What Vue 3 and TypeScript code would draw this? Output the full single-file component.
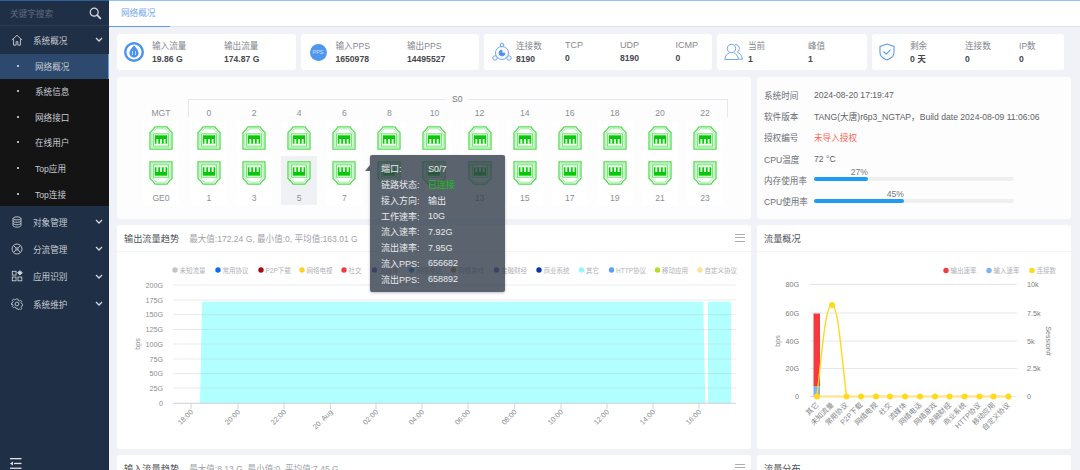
<script setup lang="ts">
interface SubItem { label: string; active?: boolean }
const subItems: SubItem[] = [
  { label: '网络概况', active: true },
  { label: '系统信息' },
  { label: '网络接口' },
  { label: '在线用户' },
  { label: 'Top应用' },
  { label: 'Top连接' },
]
const groups = ['对象管理', '分流管理', '应用识别', '系统维护']
const topPorts = [0, 2, 4, 6, 8, 10, 12, 14, 16, 18, 20, 22]

const info = [
  { k: '系统时间', v: '2024-08-20 17:19:47' },
  { k: '软件版本', v: 'TANG(大唐)r6p3_NGTAP，Build date 2024-08-09 11:06:06' },
  { k: '授权编号', v: '未导入授权', warn: true },
  { k: 'CPU温度', v: '72 °C' },
]
const usage = [
  { k: '内存使用率', pct: 27 },
  { k: 'CPU使用率', pct: 45 },
]
const tip = [
  ['端口:', 'S0/7'],
  ['链路状态:', '已连接'],
  ['接入方向:', '输出'],
  ['工作速率:', '10G'],
  ['流入速率:', '7.92G'],
  ['流出速率:', '7.95G'],
  ['流入PPS:', '656682'],
  ['流出PPS:', '658892'],
]

const legend1 = [
  [175, '未知流量', '#c4c4c4'], [218, '常用协议', '#0a6cff'], [261, 'P2P下载', '#a50b10'],
  [302, '网络电视', '#ffd21a'], [344, '社交', '#f6393f'], [374.5, '流媒体', '#6c4fe0'],
  [411.5, '网络电话', '#1f8fd8'], [453.5, '网络游戏', '#c98a2a'], [496.5, '金融财经', '#7a4fc8'],
  [539, '商业系统', '#0a35a8'], [581.5, '其它', '#8ff7ff'], [611.5, 'HTTP协议', '#5a9dff'],
  [657.5, '移动应用', '#b4dd2a'], [700, '自定义协议', '#ffe19a'],
] as [number, string, string][]
const yAxis1 = [
  [285, '200G'], [300, '175G'], [314.7, '150G'], [329.5, '125G'],
  [344, '100G'], [359, '75G'], [373.7, '50G'], [388, '25G'], [403, '0'],
] as [number, string][]
const xAxis1 = [
  [191, '18:00'], [238, '20:00'], [284, '22:00'], [330.5, '20. Aug'], [376, '02:00'], [422, '04:00'],
  [468, '06:00'], [514.7, '08:00'], [561, '10:00'], [607, '12:00'], [653, '14:00'], [699, '16:00'],
] as [number, string][]

const left2 = [[284.5, '80G'], [313, '60G'], [341, '40G'], [368.5, '20G'], [396.5, '0']] as [number, string][]
const right2 = ['10k', '7.5k', '5k', '2.5k', '0']
const pts2 = [817, 832, 846.5, 861, 876, 890, 905, 920, 935, 949.5, 964.5, 979.5, 993.5, 1008.5]
const cats2 = ['其它', '未知流量', '常用协议', 'P2P下载', '网络电视', '社交', '流媒体', '网络电话', '网络游戏', '金融财经', '商业系统', 'HTTP协议', '移动应用', '自定义协议']
const legend2 = [[946, '输出速率', '#f6393f'], [989, '输入速率', '#7ab2f5'], [1032, '连接数', '#ffd91a']] as [number, string, string][]
</script>

<template>
  <div class="app">
    <aside class="side">
      <div class="search">
        <span>关键字搜索</span>
        <svg width="13" height="13" viewBox="0 0 13 13" fill="none" stroke="#d5d9df" stroke-width="1.2"><circle cx="5.2" cy="5.2" r="4"/><path d="M8.2 8.2l3.6 3.6" stroke-width="1.8"/></svg>
      </div>
      <div class="grp first">
        <svg class="gi" viewBox="0 0 14 14" fill="none" stroke="#cfd4da" stroke-width="1"><path d="M1 7l6-5.5L13 7M3 6v7h3V9h2v4h3V6"/></svg>
        <span>系统概况</span>
        <svg class="chev" viewBox="0 0 8 5" fill="none" stroke="#d5d9df" stroke-width="1.3"><path d="M1 1l3 3 3-3"/></svg>
      </div>
      <ul class="subs">
        <li v-for="s in subItems" :key="s.label" :class="{ on: s.active }"><i></i>{{ s.label }}</li>
      </ul>
      <div v-for="(g, gi) in groups" :key="g" class="grp">
        <svg v-if="gi === 0" class="gi" viewBox="0 0 14 14" fill="none" stroke="#cfd4da" stroke-width="1"><ellipse cx="7" cy="2.8" rx="4.6" ry="1.8"/><path d="M2.4 2.8v8.4c0 1 2 1.8 4.6 1.8s4.6-.8 4.6-1.8V2.8M2.4 5.6c0 1 2 1.8 4.6 1.8s4.6-.8 4.6-1.8M2.4 8.4c0 1 2 1.8 4.6 1.8s4.6-.8 4.6-1.8"/></svg>
        <svg v-else-if="gi === 1" class="gi" viewBox="0 0 14 14" fill="none" stroke="#cfd4da" stroke-width="1"><circle cx="7" cy="7" r="5.8"/><circle cx="7" cy="7" r="1.4"/><path d="M3 3l3 3M11 3L8 6M3 11l3-3M11 11L8 8"/></svg>
        <svg v-else-if="gi === 2" class="gi" viewBox="0 0 14 14" fill="none" stroke="#cfd4da" stroke-width="1"><rect x="1.5" y="1.5" width="4.4" height="4.4"/><rect x="1.5" y="8.2" width="4.4" height="4.4"/><rect x="8.2" y="8.2" width="4.4" height="4.4"/><path d="M10.4 .8l2.8 2.4-2.8 2.6-2.8-2.6z" fill="#cfd4da"/></svg>
        <svg v-else class="gi" viewBox="0 0 14 14" fill="none" stroke="#cfd4da" stroke-width="1"><circle cx="7" cy="7" r="2.2"/><path d="M6 1h2l.4 1.7 1.5.7 1.5-.9 1.4 1.4-.9 1.5.6 1.5 1.5.5v2l-1.5.4-.6 1.5.9 1.5-1.4 1.4-1.5-.9-1.5.6L8 13H6l-.4-1.6-1.500-.6-1.500.9-1.400-1.400.9-1.500-.6-1.500L0 8V6l1.500-.5.6-1.500-.9-1.500 1.400-1.400 1.500.9 1.500-.7z" transform="translate(.4 .2) scale(.95)"/></svg>
        <span>{{ g }}</span>
        <svg class="chev" viewBox="0 0 8 5" fill="none" stroke="#d5d9df" stroke-width="1.3"><path d="M1 1l3 3 3-3"/></svg>
      </div>
      <div class="collapse">
        <svg width="12" height="11" viewBox="0 0 12 11" fill="#dfe3e8"><rect width="11.5" height="1.3"/><rect x="4" y="4.8" width="7.5" height="1.3"/><rect y="9.6" width="11.5" height="1.3"/><path d="M0 5.4L3 3.4v4z"/></svg>
      </div>
    </aside>

    <main class="main">
      <nav class="tabs"><span class="tab">网络概况</span></nav>
      <div class="body">
        <section class="stats">
          <div class="stat s1">
            <svg class="ic" width="20" height="20" viewBox="0 0 20 20" style="margin-left:7px"><circle cx="10" cy="10" r="10" fill="#4a93ee"/><circle cx="10" cy="10" r="7.6" fill="#fff"/><path d="M10 3.6c2.6 3 4.6 5 4.6 7.4a4.6 4.6 0 0 1-9.2 0C5.400 8.600 7.400 6.600 10 3.600z" fill="#4a93ee"/><path d="M8.500 9v4M11.500 9v4" stroke="#cfe2fb" stroke-width=".9"/></svg>
            <div class="m" style="margin-left:8px;width:72px"><label>输入流量</label><b>19.86 G</b></div>
            <div class="m"><label>输出流量</label><b>174.87 G</b></div>
          </div>
          <div class="stat s2">
            <div class="pps">PPS</div>
            <div class="m" style="margin-left:9px;width:71.500px"><label>输入PPS</label><b>1650978</b></div>
            <div class="m"><label>输出PPS</label><b>14495527</b></div>
          </div>
          <div class="stat s3">
            <svg class="ic" width="20" height="20" viewBox="0 0 20 20" style="margin-left:8px" fill="none" stroke="#5b9cf0" stroke-width=".9"><circle cx="10" cy="11" r="6.500"/><circle cx="10" cy="3" r="1.800" fill="#fff"/><circle cx="3" cy="16" r="2.200" fill="#fff"/><circle cx="17" cy="16" r="2.200" fill="#fff"/><path d="M10 8a3 3 0 1 0 3 3h-3z" fill="#4a8fea"/></svg>
            <div class="m" style="margin-left:4px;width:49px"><label>连接数</label><b>8190</b></div>
            <div class="m up" style="width:55px"><label>TCP</label><b>0</b></div>
            <div class="m up" style="width:55.500px"><label>UDP</label><b>8190</b></div>
            <div class="m up"><label>ICMP</label><b>0</b></div>
          </div>
          <div class="stat s4">
            <svg class="ic" width="19" height="18" viewBox="0 0 19 18" style="margin-left:7px" fill="none" stroke="#6fa6ef" stroke-width="1"><circle cx="7.500" cy="5.500" r="4.200"/><path d="M.8 16.500c0-4 3-6 4.600-6.500M10 10c2 .8 4.400 2.800 4.400 6.500H.8M11 1.500c3 0 4.500 2 4.300 4.200-.1 1.500-1 2.800-2 3.500 2.300.8 4.800 3 5 7h-3.500"/></svg>
            <div class="m" style="margin-left:5px;width:60px"><label>当前</label><b>1</b></div>
            <div class="m"><label>峰值</label><b>1</b></div>
          </div>
          <div class="stat s5">
            <svg class="ic" width="16" height="18" viewBox="0 0 16 18" style="margin-left:7px" fill="none" stroke="#5b9cf0" stroke-width="1.100"><path d="M8 1l7 2.500v6c0 3.500-3 6-7 7.500-4-1.500-7-4-7-7.500v-6z"/><path d="M4.500 8.500l2.700 2.700 4.300-4.500"/></svg>
            <div class="m" style="margin-left:15px;width:55px"><label>剩余</label><b>0 天</b></div>
            <div class="m" style="width:54px"><label>连接数</label><b>0</b></div>
            <div class="m"><label>IP数</label><b>0</b></div>
          </div>
        </section>

        <section class="row r1">
          <div class="panel ports">
            <div class="pcol mgt">
              <div class="plabel">MGT</div>
              <div class="cell"><svg class="rj" viewBox="0 0 24 24"><use href="#rj45"/></svg></div>
              <div class="cell low"><svg class="rj flip" viewBox="0 0 24 24"><use href="#rj45"/></svg><span>GE0</span></div>
            </div>
            <div class="s0">
              <em>S0</em>
              <div v-for="p in topPorts" :key="p" class="pcol">
                <div class="plabel">{{ p }}</div>
                <div class="cell"><svg class="rj" viewBox="0 0 24 24"><use href="#rj45"/></svg></div>
                <div class="cell low" :class="{ hover: p === 4 }"><svg class="rj flip" viewBox="0 0 24 24"><use href="#rj45"/></svg><span>{{ p + 1 }}</span></div>
              </div>
            </div>
            <div class="tip">
              <div v-for="t in tip" :key="t[0]" class="tipr"><span>{{ t[0] }}</span><span :class="{ ok: t[1] === '已连接' }">{{ t[1] }}</span></div>
            </div>
          </div>

          <div class="panel sys">
            <div v-for="i in info" :key="i.k" class="irow"><span class="k">{{ i.k }}</span><span :class="{ warn: i.warn }">{{ i.v }}</span></div>
            <div v-for="u in usage" :key="u.k" class="irow"><span class="k">{{ u.k }}</span>
              <div class="track"><div class="fill" :style="{ width: u.pct + '%' }"><span>{{ u.pct }}%</span></div></div>
            </div>
          </div>
        </section>

        <section class="row r2">
          <div class="panel">
            <header class="ph"><h3>输出流量趋势</h3><small>最大值:172.24 G, 最小值:0, 平均值:163.01 G</small>
              <div class="menu"><i></i><i></i><i></i></div></header>
            <svg class="chart" width="634" height="197" viewBox="117 252 634 197">
              <g v-for="l in legend1" :key="l[1]">
                <circle :cx="l[0]" cy="270" r="2.700" :fill="l[2]"/>
                <text :x="l[0] + 4.500" y="272.500" class="lg">{{ l[1] }}</text>
              </g>
              <path d="M200 403L202 301.700H703.300L705.300 403zM708 403V301.700H731V403z" fill="#b2ffff"/>
              <line v-for="y in yAxis1" :key="y[1]" x1="173" x2="736" :y1="y[0]" :y2="y[0]" stroke="#b8c4c8" stroke-opacity=".35"/>
              <line x1="173" x2="736" y1="403.500" y2="403.500" stroke="#d8dce0"/>
              <text v-for="y in yAxis1" :key="'t' + y[1]" x="163" :y="y[0] + 2.500" text-anchor="end" class="ax">{{ y[1] }}</text>
              <text transform="translate(140 344) rotate(-90)" text-anchor="middle" class="ax">bps</text>
              <g v-for="x in xAxis1" :key="x[1]">
                <line :x1="x[0]" :x2="x[0]" y1="403" y2="409" stroke="#d0d4d8"/>
                <text :transform="`translate(${x[0] + 2.500} 412.500) rotate(-45)`" text-anchor="end" class="ax">{{ x[1] }}</text>
              </g>
            </svg>
          </div>
          <div class="panel">
            <header class="ph"><h3>流量概况</h3></header>
            <svg class="chart" width="314" height="197" viewBox="757 252 314 197">
              <g v-for="l in legend2" :key="l[1]">
                <circle :cx="l[0]" cy="270.500" r="2.700" :fill="l[2]"/>
                <text :x="l[0] + 4.500" y="273" class="lg">{{ l[1] }}</text>
              </g>
              <line v-for="y in left2" :key="y[1]" x1="810" x2="1017" :y1="y[0]" :y2="y[0]" stroke="#e4e6e9"/>
              <text v-for="y in left2" :key="'l' + y[1]" x="799" :y="y[0] + 2.500" text-anchor="end" class="ax dark">{{ y[1] }}</text>
              <text v-for="(r, i) in right2" :key="r" x="1027" :y="left2[i][0] + 2.500" class="ax dark">{{ r }}</text>
              <text transform="translate(780 341) rotate(-90)" text-anchor="middle" class="ax">bps</text>
              <text transform="translate(1046 341) rotate(90)" text-anchor="middle" class="ax dark">Session#</text>
              <rect x="813.500" y="313.500" width="6.500" height="72.500" fill="#f6393f"/>
              <rect x="813.500" y="386" width="6.500" height="11" fill="#7ab2f5"/>
              <path d="M817 396.500H1008.500" stroke="#fbe79a" stroke-width="2.500"/>
              <path d="M817 396.500C823 340 826 305 832 305C838 305 841 350 846.500 396.500" fill="none" stroke="#ffd91a" stroke-width="1.400"/>
              <circle v-for="(x, i) in pts2" :key="x" :cx="x" :cy="i === 1 ? 305 : 396.500" r="3" fill="#ffd91a"/>
              <text v-for="(c, i) in cats2" :key="c" :transform="`translate(${pts2[i] + 2} 405.500) rotate(-45)`" text-anchor="end" class="lg cat">{{ c }}</text>
            </svg>
          </div>
        </section>

        <section class="row r3">
          <div class="panel">
            <header class="ph"><h3>输入流量趋势</h3><small>最大值:8.13 G, 最小值:0, 平均值:7.45 G</small>
              <div class="menu"><i></i><i></i><i></i></div></header>
          </div>
          <div class="panel">
            <header class="ph"><h3>流量分布</h3></header>
          </div>
        </section>
      </div>
    </main>

    <svg class="defs" width="0" height="0">
      <symbol id="rj45" viewBox="0 0 24 24">
        <path d="M6 .8h12l2 2.800 3 2.900v16.700H1V6.500l3-2.900z" fill="#fff" stroke="#4fdc4f" stroke-width="1.300"/>
        <path d="M7 2.800h10l1.500 2.300 2.700 2.300v14.300H2.800V7.400l2.700-2.300z" fill="#fff" stroke="#a6eea6" stroke-width="1"/>
        <rect x="4.400" y="7.800" width="15.200" height="12.400" fill="#f4fff4" stroke="#6fe36f" stroke-width="1"/>
        <rect x="5.800" y="9.300" width="12.400" height="8.400" fill="#08c908"/>
        <path d="M7.400 13h1.900v4.700H7.400zM11.050 13h1.900v4.700h-1.900zM14.700 13h1.900v4.700h-1.900z" fill="#eaffea"/>
      </symbol>
    </svg>
  </div>
</template>

<style>
html, body { margin: 0; background: #f0f2f7; }
</style>

<style scoped>
.app {
  display: flex; width: 1080px; height: 470px; overflow: hidden; background: #f0f2f7;
  font-family: "Liberation Sans", "Noto Sans CJK SC", sans-serif; font-size: 8.600px; color: #606266;
}
.defs { position: absolute; }
.side {
  width: 109px; flex: none; background: #1f2f46; color: #c6cbd2; display: flex; flex-direction: column;
  border-top: 1px solid #2f5d94; box-sizing: border-box; position: relative;
}
.search {
  height: 25px; box-sizing: border-box; padding: 0 7px 0 10px; display: flex; align-items: center;
  justify-content: space-between; color: #5f6b7c; border-bottom: 1px solid #2c3c53;
}
.grp { height: 27.300px; display: flex; align-items: center; padding-left: 11px; position: relative; }
.grp.first { height: 28px; }
.gi { width: 12px; height: 12px; margin-right: 10px; flex: none; }
.chev { position: absolute; right: 6px; top: 11px; width: 8px; height: 5px; }
.subs { list-style: none; margin: 0 0 1.500px; padding: 0; background: #141414; }
.subs li { height: 25.600px; display: flex; align-items: center; padding-left: 17px; box-sizing: border-box; }
.subs li i { width: 2px; height: 2px; background: #e8e8e8; margin-right: 16px; border-radius: 50%; }
.subs li.on { background: #2d4a6e; border-right: 1px solid #6c9bd6; height: 24.500px; }
.collapse { position: absolute; left: 10px; top: 457px; line-height: 0; }

.main { flex: 1; display: flex; flex-direction: column; min-width: 0; }
.tabs { height: 27px; flex: none; box-sizing: border-box; background: #fff; border-top: 1px solid #90c4f8; border-bottom: 1px solid #d5e4f3; display: flex; }
.tab { width: 61px; box-sizing: border-box; padding-left: 12px; height: 26px; line-height: 24px; color: #73a6ee; border-bottom: 1px solid #5c9bf0; }

.body { padding: 7px 9px 0 8px; display: flex; flex-direction: column; gap: 6px; }
.stats { display: flex; gap: 5px; height: 36px; margin-bottom: 1px; }
.stat { background: #fff; border-radius: 3px; display: flex; align-items: center; }
.s1, .s2 { width: 178.500px; }
.s3 { width: 228px; }
.s4 { width: 150px; }
.s5 { width: 192px; }
.ic { flex: none; }
.m { display: flex; flex-direction: column; gap: 3px; color: #85888e; line-height: 10px; margin-top: 1px; }
.m label { display: block; }
.m b { color: #46484d; font-size: 8.600px; font-weight: 700; }
.m.up { font-size: 9px; position: relative; top: -1.500px; }
.pps { width: 17px; height: 17px; margin-left: 9px; border-radius: 50%; background: #4e96ee; color: #cfe3fb; font-size: 5.500px; line-height: 17px; text-align: center; flex: none; }

.row { display: grid; grid-template-columns: 634px 314px; gap: 6px; }
.panel { background: #fff; border-radius: 3px; position: relative; }
.r1 { height: 142px; }
.r2 { height: 224px; }
.r3 { height: 60px; }

.ports { display: flex; align-items: flex-end; padding: 22px 0 14px 26px; box-sizing: border-box; background: #fdfdfe; }
.s0 { display: flex; gap: 9.100px; position: relative; margin-left: 9px; padding: 7px 5px 0 3px; }
.s0::before {
  content: ""; position: absolute; left: 0; right: 0; top: 0; height: 18px; box-sizing: border-box;
  border: 1px solid #e6e7ea; border-bottom: 0;
}
.s0 em {
  position: absolute; left: 258px; top: -5px; padding: 0 6px; background: #fdfdfe; font-style: normal; color: #777; line-height: 11px; z-index: 1;
}
.pcol { width: 36px; display: flex; flex-direction: column; align-items: stretch; position: relative; }
.plabel { height: 15px; line-height: 15px; text-align: center; color: #8c8f94; background: #fdfdfe; z-index: 1; }
.cell { height: 35px; background: #fff; display: flex; flex-direction: column; align-items: center; padding-top: 5px; box-sizing: border-box; }
.cell.low { height: 49px; padding-top: 5px; color: #8c8f94; }
.cell.low span { margin-top: 6px; line-height: 14px; }
.cell.hover { background: #f0f1f4; }
.rj { width: 24px; height: 24px; display: block; }
.flip { transform: scaleY(-1); }

.tip {
  position: absolute; left: 253px; top: 78px; width: 135px; height: 137px; box-sizing: border-box; padding: 6px 0 0 11px;
  background: rgba(50, 60, 75, .8); border-radius: 2px; color: #e8eaed; z-index: 5; font-size: 9px;
  box-shadow: 0 1px 3px rgba(0, 0, 0, .25);
}
.tip::before {
  content: ""; position: absolute; left: -5px; top: 10px; width: 0; height: 0;
  border-left: 5px solid transparent; border-bottom: 6px solid rgba(50, 60, 75, .8);
}
.tipr { display: flex; height: 15.750px; align-items: center; }
.tipr span:first-child { width: 47px; }
.ok { color: #12c312; }

.sys { padding: 7px 7px 0; background: #fdfdfe; }
.irow { display: flex; align-items: center; height: 21.300px; color: #606266; }
.k { width: 50px; flex: none; color: #6b6e73; }
.warn { color: #f5664f; }
.track { width: 200px; height: 4px; background: #eeeff1; border-radius: 2px; position: relative; margin-top: -1px; }
.fill { height: 4px; border-radius: 2px; background: #1f9bf5; position: relative; }
.fill span { position: absolute; right: 0; top: -9px; line-height: 9px; color: #777; }

.ph { height: 27px; box-sizing: border-box; display: flex; align-items: center; padding-left: 7px; border-bottom: 1px solid #f3f4f7; position: relative; }
.ph h3 { margin: 0; font-size: 9.200px; font-weight: 400; color: #505358; }
.ph small { font-size: 8.550px; color: #a0a3a8; margin-left: 10px; }
.menu { position: absolute; right: 6px; top: 9px; width: 10px; display: flex; flex-direction: column; gap: 2.400px; }
.menu i { height: 1px; background: #a9adb2; display: block; }
.chart { display: block; }
.lg { font-size: 6.500px; fill: #aeb1b5; }
.cat { fill: #85888c; font-size: 7.200px; }
.ax { font-size: 7.200px; fill: #8a8d91; }
.ax.dark { fill: #7a7d81; }
</style>
